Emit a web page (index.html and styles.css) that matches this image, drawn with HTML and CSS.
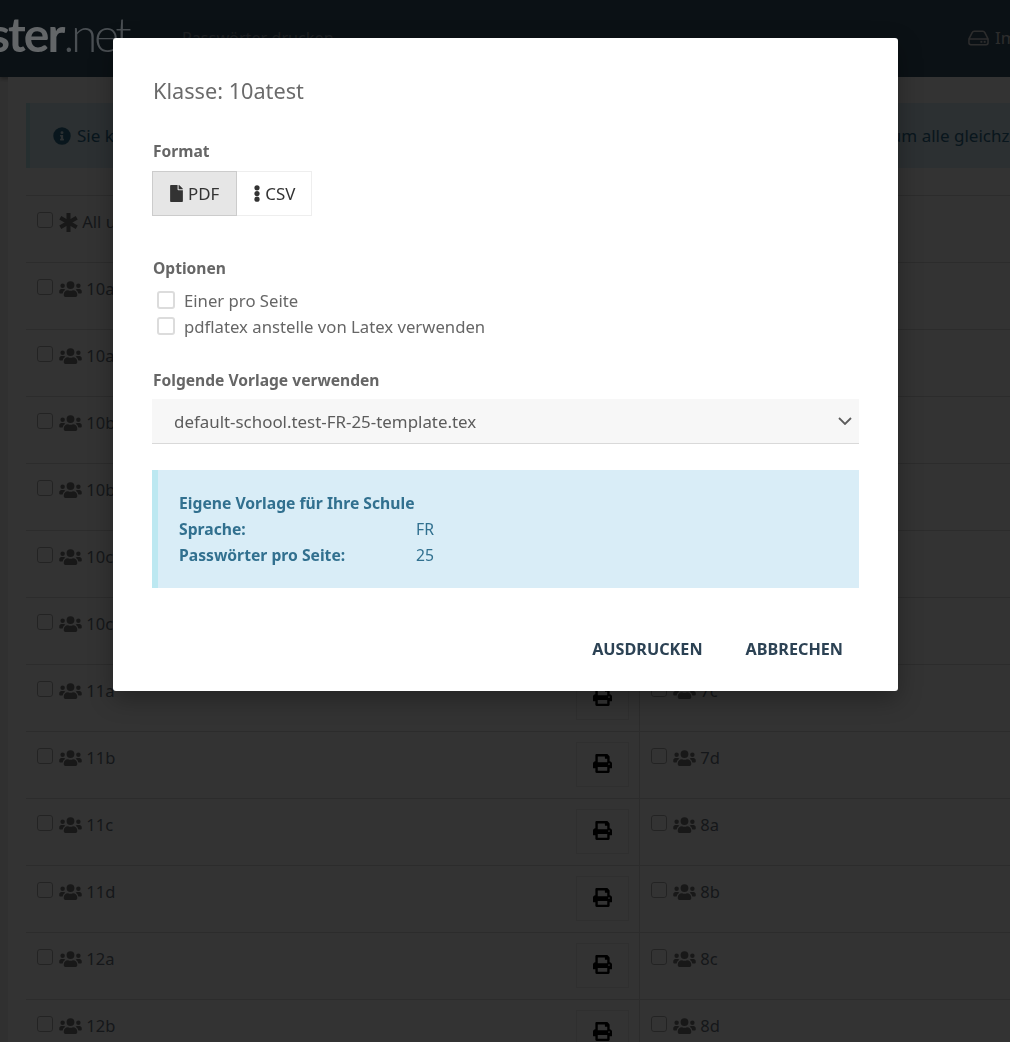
FILE: index.html
```html
<!DOCTYPE html>
<html lang="de">
<head>
  <meta charset="UTF-8">
  <title>Passwörter drucken</title>
  <link rel="stylesheet" href="styles.css">
</head>
<body>
  <svg class="icon-defs" width="0" height="0">
    <symbol id="i-users" viewBox="0 0 640 512"><path d="M96 224a64 64 0 1 0 0-128 64 64 0 0 0 0 128zm448 0a64 64 0 1 0 0-128 64 64 0 0 0 0 128zm32 32h-64c-17.600 0-33.500 7.100-45.100 18.600 40.300 22.100 68.900 62 75.100 109.400h66c17.700 0 32-14.300 32-32v-32c0-35.300-28.700-64-64-64zm-256 0a112 112 0 1 0 0-224 112 112 0 0 0 0 224zm76.800 32h-8.300c-20.800 10-43.900 16-68.500 16s-47.600-6-68.500-16h-8.300C179.600 288 128 339.600 128 403.200V432c0 26.500 21.500 48 48 48h288c26.500 0 48-21.500 48-48v-28.800c0-63.600-51.600-115.200-115.200-115.200zm-223.700-13.400C161.500 263.100 145.600 256 128 256H64c-35.300 0-64 28.700-64 64v32c0 17.700 14.300 32 32 32h65.900c6.300-47.400 34.900-87.300 75.200-109.400z"/></symbol>
    <symbol id="i-print" viewBox="0 0 512 512"><path d="M448 192V77.250c0-8.490-3.370-16.620-9.370-22.630L393.370 9.370c-6-6-14.140-9.370-22.630-9.370H96C78.330 0 64 14.330 64 32v160c-35.350 0-64 28.650-64 64v112c0 8.840 7.160 16 16 16h48v96c0 17.670 14.330 32 32 32h320c17.670 0 32-14.330 32-32v-96h48c8.840 0 16-7.160 16-16V256c0-35.350-28.650-64-64-64zm-64 256H128v-96h256v96zm0-224H128V64h192v48c0 8.840 7.160 16 16 16h48v96zm48 72c-13.250 0-24-10.750-24-24 0-13.260 10.750-24 24-24s24 10.740 24 24c0 13.250-10.750 24-24 24z"/></symbol>
  </svg>

  <header class="navbar">
    <div class="logo"><b>ster</b><span>.net</span></div>
    <div class="nav-title">Passwörter drucken</div>
    <div class="nav-right">
      <svg class="hdd" viewBox="0 0 22 16" width="21" height="16"><path d="M1 9 L4.500 2.200 Q5 1 6.500 1 H15.500 Q17 1 17.500 2.200 L21 9 V13 Q21 15 19 15 H3 Q1 15 1 13 Z M1 9 H21" fill="none" stroke="currentColor" stroke-width="1.600"/><rect x="13" y="11" width="2" height="2" fill="currentColor"/><rect x="16.500" y="11" width="2" height="2" fill="currentColor"/></svg>
      <span>Import</span>
    </div>
  </header>

  <main class="content">
    <div class="info-bar">
      <svg class="info-icon" viewBox="0 0 512 512" width="18" height="18"><path d="M256 8a248 248 0 1 0 0 496 248 248 0 0 0 0-496zm0 110a42 42 0 1 1 0 84 42 42 0 0 1 0-84zm56 254c0 6.600-5.400 12-12 12h-88c-6.600 0-12-5.400-12-12v-24c0-6.600 5.400-12 12-12h12v-64h-12c-6.600 0-12-5.400-12-12v-24c0-6.600 5.400-12 12-12h64c6.600 0 12 5.400 12 12v100h12c6.600 0 12 5.400 12 12z"/></svg>
      <span>Sie können Passwörter für jede Klasse einzeln oder mehrere Klassen zusammen wählen und drucken, um alle gleichzeitig auszudrucken</span>
    </div>

    <div class="class-table">
      <div class="row">
        <div class="cell"><input type="checkbox"><svg class="star" viewBox="0 0 18 18"><path d="M9 0v18M1.200 4.500l15.600 9M16.800 4.500l-15.600 9" fill="none" stroke="currentColor" stroke-width="3.800"/></svg> All users</div>
        <div class="cell-action"></div>
        <div class="cell"></div>
      </div>
      <div class="row">
        <div class="cell"><input type="checkbox"><svg class="users"><use href="#i-users"/></svg> 10a</div>
        <div class="cell-action"></div>
        <div class="cell"></div>
      </div>
      <div class="row">
        <div class="cell"><input type="checkbox"><svg class="users"><use href="#i-users"/></svg> 10atest</div>
        <div class="cell-action"></div>
        <div class="cell"></div>
      </div>
      <div class="row">
        <div class="cell"><input type="checkbox"><svg class="users"><use href="#i-users"/></svg> 10b</div>
        <div class="cell-action"></div>
        <div class="cell"></div>
      </div>
      <div class="row">
        <div class="cell"><input type="checkbox"><svg class="users"><use href="#i-users"/></svg> 10b</div>
        <div class="cell-action"></div>
        <div class="cell"></div>
      </div>
      <div class="row">
        <div class="cell"><input type="checkbox"><svg class="users"><use href="#i-users"/></svg> 10c</div>
        <div class="cell-action"></div>
        <div class="cell"></div>
      </div>
      <div class="row">
        <div class="cell"><input type="checkbox"><svg class="users"><use href="#i-users"/></svg> 10c</div>
        <div class="cell-action"></div>
        <div class="cell"></div>
      </div>
      <div class="row">
        <div class="cell"><input type="checkbox"><svg class="users"><use href="#i-users"/></svg> 11a</div>
        <div class="cell-action"><span class="print-btn"><svg><use href="#i-print"/></svg></span></div>
        <div class="cell"><input type="checkbox"><svg class="users"><use href="#i-users"/></svg> 7c</div>
      </div>
      <div class="row">
        <div class="cell"><input type="checkbox"><svg class="users"><use href="#i-users"/></svg> 11b</div>
        <div class="cell-action"><span class="print-btn"><svg><use href="#i-print"/></svg></span></div>
        <div class="cell"><input type="checkbox"><svg class="users"><use href="#i-users"/></svg> 7d</div>
      </div>
      <div class="row">
        <div class="cell"><input type="checkbox"><svg class="users"><use href="#i-users"/></svg> 11c</div>
        <div class="cell-action"><span class="print-btn"><svg><use href="#i-print"/></svg></span></div>
        <div class="cell"><input type="checkbox"><svg class="users"><use href="#i-users"/></svg> 8a</div>
      </div>
      <div class="row">
        <div class="cell"><input type="checkbox"><svg class="users"><use href="#i-users"/></svg> 11d</div>
        <div class="cell-action"><span class="print-btn"><svg><use href="#i-print"/></svg></span></div>
        <div class="cell"><input type="checkbox"><svg class="users"><use href="#i-users"/></svg> 8b</div>
      </div>
      <div class="row">
        <div class="cell"><input type="checkbox"><svg class="users"><use href="#i-users"/></svg> 12a</div>
        <div class="cell-action"><span class="print-btn"><svg><use href="#i-print"/></svg></span></div>
        <div class="cell"><input type="checkbox"><svg class="users"><use href="#i-users"/></svg> 8c</div>
      </div>
      <div class="row">
        <div class="cell"><input type="checkbox"><svg class="users"><use href="#i-users"/></svg> 12b</div>
        <div class="cell-action"><span class="print-btn"><svg><use href="#i-print"/></svg></span></div>
        <div class="cell"><input type="checkbox"><svg class="users"><use href="#i-users"/></svg> 8d</div>
      </div>
    </div>
  </main>

  <div class="backdrop"></div>

  <div class="modal">
    <h4 class="modal-title">Klasse: 10atest</h4>

    <div class="field-label">Format</div>
    <div class="btn-group">
      <span class="format-btn active">
        <svg viewBox="0 0 384 512" width="13" height="17"><path d="M224 136V0H24C10.700 0 0 10.700 0 24v464c0 13.300 10.700 24 24 24h336c13.300 0 24-10.700 24-24V160H248c-13.200 0-24-10.800-24-24zm160-14.100v6.100H256V0h6.100c6.400 0 12.500 2.500 17 7l97.900 98c4.500 4.500 7 10.600 7 16.900z"/></svg>
        PDF
      </span>
      <span class="format-btn">
        <svg viewBox="0 0 6 17" width="6" height="17"><circle cx="3" cy="2.800" r="2.600"/><circle cx="3" cy="8.500" r="2.600"/><circle cx="3" cy="14.200" r="2.600"/></svg>
        CSV
      </span>
    </div>

    <div class="field-label options-label">Optionen</div>
    <label class="option"><span class="box"></span>Einer pro Seite</label>
    <label class="option"><span class="box"></span>pdflatex anstelle von Latex verwenden</label>

    <div class="field-label template-label">Folgende Vorlage verwenden</div>
    <div class="select">
      <span>default-school.test-FR-25-template.tex</span>
      <svg viewBox="0 0 14 8" width="14" height="8"><path d="M1 1l6 6 6-6" fill="none" stroke="currentColor" stroke-width="1.800"/></svg>
    </div>

    <div class="template-info">
      <strong>Eigene Vorlage für Ihre Schule</strong>
      <div class="info-row"><strong>Sprache:</strong><span>FR</span></div>
      <div class="info-row"><strong>Passwörter pro Seite:</strong><span>25</span></div>
    </div>

    <div class="modal-actions">
      <span class="action">AUSDRUCKEN</span>
      <span class="action">ABBRECHEN</span>
    </div>
  </div>
</body>
</html>
```

FILE: styles.css
```css
* {
  box-sizing: border-box;
}
html, body {
  height: 100%;
}
body {
  margin: 0;
  height: 1042px;
  overflow: hidden;
  font-family: "Noto Sans", sans-serif;
  font-size: 16px;
  color: #2c3e4f;
  background-color: #f0f0f0;
}
.icon-defs {
  display: block;
  height: 0;
}

/* top bar */
.navbar {
  display: flex;
  align-items: center;
  height: 77px;
  overflow: hidden;
  background-color: #3a5468;
  box-shadow: 0 2px 4px rgba(0, 0, 0, 0.3);
  color: #ffffff;
}
.logo {
  position: relative;
  z-index: 2;
  flex: none;
  width: 193px;
  margin-left: -11px;
  margin-top: -10px;
  font-family: "Lato", sans-serif;
  font-size: 48px;
  letter-spacing: -2px;
  line-height: 77px;
  color: #636668;
}
.logo b {
  font-weight: 700;
}
.logo span {
  font-weight: 300;
  letter-spacing: -3.500px;
  color: #4a4f53;
}
.nav-title {
  margin-top: -2px;
  font-size: 16.200px;
  color: #90a0ad;
}
.nav-right {
  display: flex;
  align-items: center;
  gap: 6px;
  flex: none;
  width: 42px;
  overflow: hidden;
  margin-left: auto;
  margin-top: -2px;
  font-size: 17px;
  color: #dddddd;
}
.hdd {
  flex: none;
}

/* page behind the dialog */
.content {
  height: 965px;
  margin-left: 8px;
  padding: 26px 0 0 18px;
  background-color: #ffffff;
}
.info-bar {
  display: flex;
  align-items: center;
  gap: 6px;
  height: 65px;
  padding-left: 23px;
  overflow: hidden;
  white-space: nowrap;
  font-size: 17px;
  color: #2f6f8f;
  background-color: #d9edf7;
  border-left: 4px solid #bce8f1;
  fill: #2f6f8f;
}
.info-icon {
  flex: none;
}
.class-table {
  margin-top: 27px;
}
.row {
  display: flex;
  height: 67px;
  border-top: 1px solid #dddddd;
}
.cell {
  display: flex;
  align-items: flex-start;
  padding: 13px 0 0 11px;
  font-size: 16.500px;
  line-height: 26px;
  white-space: pre;
  color: #6c7680;
}
.row .cell:first-child {
  width: 540px;
}
.row .cell:last-child {
  border-left: 1px solid #dddddd;
  flex: 1;
}
.cell input {
  width: 16px;
  height: 16px;
  margin: 3px 6px 0 0;
  appearance: none;
  background: none;
  border: 1px solid #b0b0b0;
  border-radius: 3px;
}
.users {
  width: 23px;
  height: 18px;
  margin: 4px 0 0 0;
  fill: #777777;
}
.star {
  width: 19px;
  height: 19px;
  margin: 4px 0 0 0;
  color: #777777;
}
.cell-action {
  width: 73px;
  padding: 10px 0 0 10px;
}
.print-btn {
  display: flex;
  align-items: center;
  justify-content: center;
  width: 53px;
  height: 45px;
  padding-bottom: 3px;
  border: 1px solid #ececec;
}
.print-btn svg {
  width: 19px;
  height: 19px;
  fill: #000000;
}

.backdrop {
  position: fixed;
  inset: 0;
  background-color: rgba(0, 0, 0, 0.8);
}

/* dialog */
.modal {
  position: fixed;
  z-index: 3;
  top: 38px;
  left: 113px;
  width: 785px;
  height: 653px;
  padding: 38px 39px 0 39px;
  background-color: #ffffff;
  border-radius: 3px;
  box-shadow: 0 8px 24px rgba(0, 0, 0, 0.3);
  color: #666666;
}
.modal-title {
  margin: 0 0 0 1px;
  font-size: 21.700px;
  font-weight: 400;
  line-height: 30px;
  color: #6b6b6b;
}
.field-label {
  margin: 33px 0 0 1px;
  font-size: 15.600px;
  font-weight: 700;
  line-height: 24px;
  color: #666666;
}
.btn-group {
  display: flex;
  margin-top: 8px;
}
.format-btn {
  display: flex;
  align-items: center;
  gap: 5px;
  height: 45px;
  padding: 0 17px;
  font-size: 16.900px;
  color: #333333;
  fill: #333333;
  border: 1px solid #eeeeee;
}
.format-btn + .format-btn {
  padding-right: 16px;
  border-left: none;
}
.format-btn.active {
  background-color: #e6e6e6;
  border-color: #cccccc;
}
.options-label {
  margin-top: 40px;
}
.option {
  display: flex;
  align-items: center;
  height: 26px;
  padding-left: 5px;
  font-size: 16.720px;
}
.options-label + .option {
  margin-top: 7px;
}
.box {
  width: 18px;
  height: 18px;
  margin-right: 9px;
  border: 2px solid #dcdcdc;
  border-radius: 3px;
}
.template-label {
  margin-top: 29px;
}
.select {
  display: flex;
  align-items: center;
  justify-content: space-between;
  height: 45px;
  margin-top: 7px;
  padding: 0 7px 0 22px;
  font-size: 16.900px;
  color: #5c5c5c;
  background-color: #f7f7f7;
  border-bottom: 1px solid #d9d9d9;
}
.template-info {
  height: 118px;
  margin-top: 26px;
  padding: 20px 20px 0 21px;
  font-size: 15.700px;
  line-height: 26px;
  color: #31708f;
  background-color: #d9edf7;
  border-left: 6px solid #bce8f1;
}
.info-row {
  display: flex;
}
.info-row strong {
  width: 237px;
}
.modal-actions {
  display: flex;
  justify-content: flex-end;
  gap: 43px;
  margin-top: 48px;
  padding-right: 16px;
}
.action {
  font-size: 16.200px;
  font-weight: 700;
  line-height: 26px;
  color: #2c4254;
}
```
